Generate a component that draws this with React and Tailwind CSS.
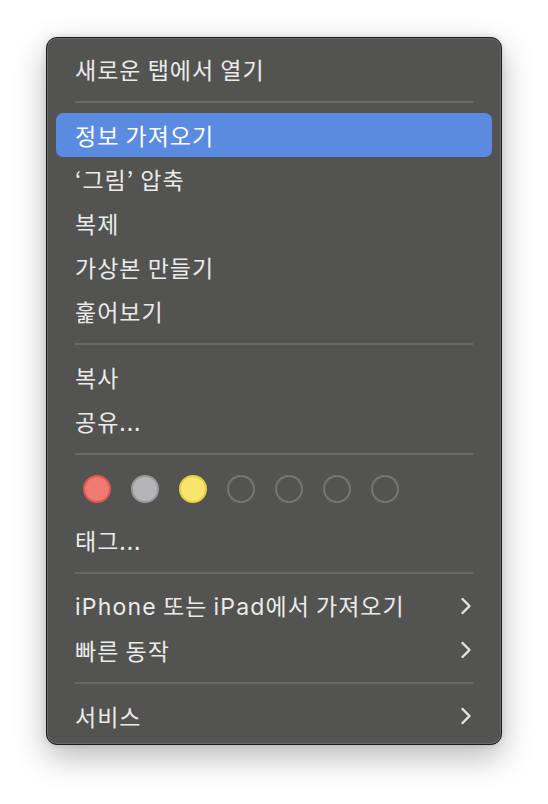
import React from 'react';

const Chevron = () => (
    <svg width="12" height="18" viewBox="0 0 12 18" fill="none" className="shrink-0">
        <path d="M2.5 2 L9.5 9 L2.5 16" stroke="#e4e4e4" strokeWidth="2.4" strokeLinecap="round" strokeLinejoin="round" />
    </svg>
);

const Lat = ({ children }) => (
    <span className="text-[23px] tracking-[1.2px]" style={{ fontFamily: 'Inter, "Liberation Sans", sans-serif' }}>
        {children}
    </span>
);

const Item = ({ label, active, sub }) => (
    <div
        className={`flex items-center justify-between h-[44px] pl-[19px] pr-[20px] rounded-[7px] text-[23px] tracking-[1px] ${
            active ? 'bg-[#5a8be0] text-white' : 'text-[#ebebeb]'
        }`}
    >
        <span className="leading-none whitespace-pre">{label}</span>
        {sub && <Chevron />}
    </div>
);

const Separator = () => (
    <div className="h-[22px] flex items-center px-[19px]">
        <div className="h-[2px] w-full bg-[#696968]" />
    </div>
);

const tags = [
    { fill: 'bg-[#ee7a72]', ring: 'border-[#e2564d]' },
    { fill: 'bg-[#b5b5b8]', ring: 'border-[#9b9b9f]' },
    { fill: 'bg-[#f9e46c]', ring: 'border-[#e9cd42]' },
    { fill: 'bg-transparent', ring: 'border-[#767676]' },
    { fill: 'bg-transparent', ring: 'border-[#767676]' },
    { fill: 'bg-transparent', ring: 'border-[#767676]' },
    { fill: 'bg-transparent', ring: 'border-[#767676]' },
];

export default function App() {
    return (
        <div
            className="min-h-screen bg-white pt-[37px] pl-[46px]"
            style={{ fontFamily: '"Noto Sans CJK KR", "Noto Sans", sans-serif' }}
        >
            <div className="w-[456px] rounded-[11px] border border-[#1c1c1c] bg-[#535352] shadow-[inset_0_0_0_1px_#6b6b6a,0_12px_32px_rgba(0,0,0,0.28),0_0_6px_rgba(0,0,0,0.12)] pt-[9px] pb-[6px] px-[9px]">
                <Item label="새로운 탭에서 열기" />
                <Separator />
                <Item label="정보 가져오기" active />
                <Item label="‘그림’ 압축" />
                <Item label="복제" />
                <Item label="가상본 만들기" />
                <Item label="훑어보기" />
                <Separator />
                <Item label="복사" />
                <Item label="공유..." />
                <Separator />
                <div className="flex items-center gap-[20px] pl-[27px] pt-[10px] pb-[15px]">
                    {tags.map((t, i) => (
                        <div key={i} className={`w-[28px] h-[28px] rounded-full border-2 ${t.fill} ${t.ring}`} />
                    ))}
                </div>
                <Item label="태그..." />
                <Separator />
                <Item
                    label={
                        <>
                            <Lat>iPhone</Lat> 또는 <Lat>iPad</Lat>에서 가져오기
                        </>
                    }
                    sub
                />
                <Item label="빠른 동작" sub />
                <Separator />
                <Item label="서비스" sub />
            </div>
        </div>
    );
}
